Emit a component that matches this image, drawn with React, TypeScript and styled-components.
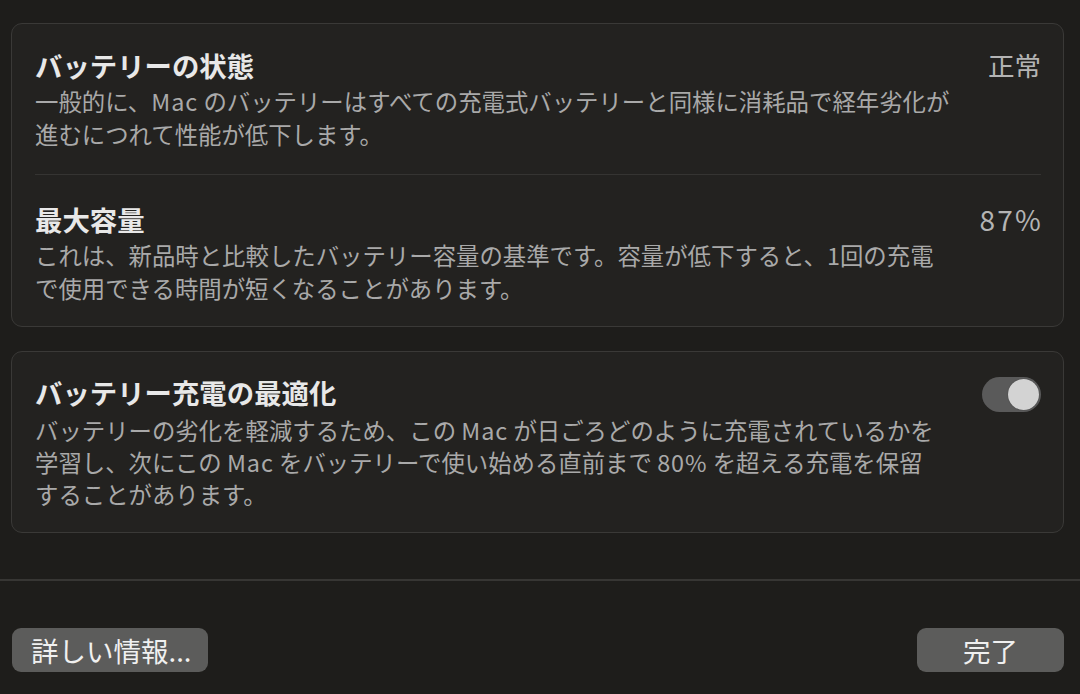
import React from "react";
import styled, { createGlobalStyle } from "styled-components";

const Global = createGlobalStyle`
  html, body { margin: 0; padding: 0; background: #1e1d1b; }
  body { font-family: "Noto Sans CJK JP", "Noto Sans", sans-serif; -webkit-font-smoothing: antialiased; }
`;

const Page = styled.div`
  width: 1080px;
  height: 694px;
  box-sizing: border-box;
  background: #1e1d1b;
  display: flex;
  flex-direction: column;
  padding-top: 23px;
  overflow: hidden;
`;

const Content = styled.div`
  display: flex;
  flex-direction: column;
  gap: 24px;
  padding: 0 16px 0 11px;
`;

const Card = styled.div`
  background: #232220;
  border: 1px solid #3a3937;
  border-radius: 11px;
  padding: 0 22px 0 23px;
`;

const Row = styled.div<{ $top: number; $bottom: number; $divider?: boolean }>`
  display: flex;
  align-items: flex-start;
  justify-content: space-between;
  gap: 20px;
  padding-top: ${(p) => p.$top}px;
  padding-bottom: ${(p) => p.$bottom}px;
  border-bottom: ${(p) => (p.$divider ? "1px solid #353432" : "none")};
`;

const TextCol = styled.div`
  display: flex;
  flex-direction: column;
`;

const Title = styled.div`
  font-size: 27.4px;
  line-height: 34px;
  font-weight: 700;
  color: #e8e8e8;
  white-space: nowrap;
`;

const Desc = styled.div<{ $gap: number; $lh: number }>`
  margin-top: ${(p) => p.$gap}px;
  font-size: 23.4px;
  line-height: ${(p) => p.$lh}px;
  color: #a9a9a9;
  white-space: nowrap;
`;

const Latin = styled.span`
  letter-spacing: 0.04em;
`;

const Value = styled.div<{ $latin?: boolean }>`
  font-size: ${(p) => (p.$latin ? 28 : 26.5)}px;
  line-height: 34px;
  letter-spacing: ${(p) => (p.$latin ? "0.08em" : "0")};
  margin-right: ${(p) => (p.$latin ? "-2px" : "0")};
  color: #b4b4b4;
  white-space: nowrap;
`;

const Toggle = styled.div`
  margin-top: 2px;
  width: 59px;
  height: 35px;
  border-radius: 18px;
  background: #5a5a5a;
  box-sizing: border-box;
  padding: 2px;
  display: flex;
  justify-content: flex-end;
  flex-shrink: 0;
`;

const Knob = styled.div`
  width: 31px;
  height: 31px;
  border-radius: 50%;
  background: #d3d3d3;
  box-shadow: 0 0 1px rgba(0, 0, 0, 0.5);
`;

const Separator = styled.div`
  margin-top: 46px;
  height: 2px;
  background: #373634;
`;

const Footer = styled.div`
  display: flex;
  justify-content: space-between;
  padding: 47px 16px 0 12px;
`;

const Button = styled.button<{ $width: number; $align: "left" | "center" }>`
  width: ${(p) => p.$width}px;
  height: 44px;
  border: none;
  border-radius: 9px;
  background: #5c5c5b;
  color: #f0f0f0;
  font-family: "Noto Sans CJK JP", "Noto Sans", sans-serif;
  font-size: 27.5px;
  line-height: 44px;
  padding: ${(p) => (p.$align === "left" ? "0 0 0 19px" : "0")};
  text-align: ${(p) => p.$align};
  box-sizing: border-box;
  white-space: nowrap;
`;

export default function App() {
  return (
    <>
      <Global />
      <Page>
        <Content>
          <Card>
            <Row $top={24} $bottom={23} $divider>
              <TextCol>
                <Title>バッテリーの状態</Title>
                <Desc $gap={3} $lh={33}>
                  一般的に、<Latin>Mac</Latin> のバッテリーはすべての充電式バッテリーと同様に消耗品で経年劣化が
                  <br />
                  進むにつれて性能が低下します。
                </Desc>
              </TextCol>
              <Value>正常</Value>
            </Row>
            <Row $top={27} $bottom={21}>
              <TextCol>
                <Title>最大容量</Title>
                <Desc $gap={3} $lh={33}>
                  これは、新品時と比較したバッテリー容量の基準です。容量が低下すると、1回の充電
                  <br />
                  で使用できる時間が短くなることがあります。
                </Desc>
              </TextCol>
              <Value $latin>87%</Value>
            </Row>
          </Card>
          <Card>
            <Row $top={23} $bottom={22}>
              <TextCol>
                <Title>バッテリー充電の最適化</Title>
                <Desc $gap={5} $lh={32}>
                  バッテリーの劣化を軽減するため、この <Latin>Mac</Latin> が日ごろどのように充電されているかを
                  <br />
                  学習し、次にこの <Latin>Mac</Latin> をバッテリーで使い始める直前まで <Latin>80%</Latin> を超える充電を保留
                  <br />
                  することがあります。
                </Desc>
              </TextCol>
              <Toggle>
                <Knob />
              </Toggle>
            </Row>
          </Card>
        </Content>
        <Separator />
        <Footer>
          <Button $width={196} $align="left">詳しい情報...</Button>
          <Button $width={147} $align="center">完了</Button>
        </Footer>
      </Page>
    </>
  );
}
